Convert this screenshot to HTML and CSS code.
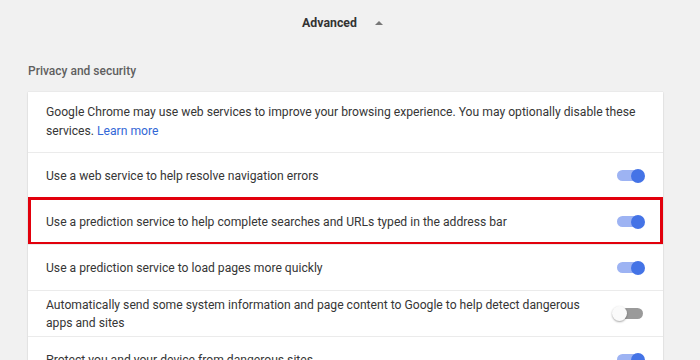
FILE: index.html
```html
<!DOCTYPE html>
<html>
<head>
<meta charset="utf-8">
<link rel="stylesheet" href="styles.css">
</head>
<body>
<div class="page">
  <div class="advanced">
    <span class="adv-label">Advanced</span>
    <span class="adv-arrow"></span>
  </div>
  <div class="section-title">Privacy and security</div>
  <div class="card">
    <div class="row intro">
      <p class="text">Google Chrome may use web services to improve your browsing experience. You may optionally disable these services. <span class="link">Learn more</span></p>
    </div>
    <div class="row">
      <div class="text">Use a web service to help resolve navigation errors</div>
      <span class="toggle on"><span class="knob"></span></span>
    </div>
    <div class="row highlight">
      <div class="text">Use a prediction service to help complete searches and URLs typed in the address bar</div>
      <span class="toggle on"><span class="knob"></span></span>
    </div>
    <div class="row">
      <div class="text">Use a prediction service to load pages more quickly</div>
      <span class="toggle on"><span class="knob"></span></span>
    </div>
    <div class="row">
      <div class="text">Automatically send some system information and page content to Google to help detect dangerous apps and sites</div>
      <span class="toggle off"><span class="knob"></span></span>
    </div>
    <div class="row">
      <div class="text">Protect you and your device from dangerous sites</div>
      <span class="toggle on"><span class="knob"></span></span>
    </div>
  </div>
</div>
</body>
</html>
```
FILE: styles.css
```css
html, body {
  margin: 0;
  padding: 0;
  background: #f1f1f1;
  font-family: Roboto, "Liberation Sans", Arial, sans-serif;
  font-size: 12.15px;
  color: #363636;
  overflow: hidden;
}
.page {
  width: 635px;
  padding-left: 28px;
}
.advanced {
  display: flex;
  justify-content: center;
  align-items: center;
  height: 46px;
  padding-right: 6px;
}
.adv-label {
  font-weight: 700;
  color: #333333;
  font-size: 12.3px;
}
.adv-arrow {
  width: 0;
  height: 0;
  border-left: 4px solid transparent;
  border-right: 4px solid transparent;
  border-bottom: 4px solid #777777;
  margin-left: 18px;
  margin-top: -1px;
}
.section-title {
  font-weight: 500;
  font-size: 12px;
  color: #5f5f5f;
  line-height: 18px;
  padding-top: 16px;
  height: 30px;
}
.card {
  background: #ffffff;
  box-shadow: 0 0 1px rgba(0,0,0,0.14), 0 1px 2px rgba(0,0,0,0.10);
}
.row {
  position: relative;
  display: flex;
  align-items: center;
  min-height: 45px;
  padding: 0 20px 0 18px;
  border-top: 1px solid #ebebeb;
  line-height: 18px;
}
.row.intro {
  border-top: none;
  min-height: 0;
  padding-top: 11px;
  padding-bottom: 11px;
  line-height: 19px;
}
.text {
  flex: 1;
  margin: 0;
  padding-right: 26px;
}
.intro .text {
  padding-right: 0;
}
.link {
  color: #3367d6;
}
.highlight::after {
  content: "";
  position: absolute;
  top: -2px;
  left: 0;
  right: 0;
  bottom: -1px;
  border: 3px solid #e2000c;
  pointer-events: none;
}
.toggle {
  display: flex;
  align-items: center;
  width: 26px;
  height: 11px;
  border-radius: 6px;
  flex: none;
}
.toggle.on {
  background: #9db3f3;
  justify-content: flex-end;
}
.toggle.off {
  background: #9a9a9a;
  justify-content: flex-start;
  width: 28px;
  margin-left: -2px;
}
.knob {
  width: 14px;
  height: 14px;
  border-radius: 50%;
  flex: none;
}
.on .knob {
  background: #4473e6;
  margin-right: -2px;
}
.off .knob {
  width: 15px;
  height: 15px;
  background: #fafafa;
  margin-left: -3px;
  box-shadow: 0 1px 2px rgba(0,0,0,0.35);
}
```
